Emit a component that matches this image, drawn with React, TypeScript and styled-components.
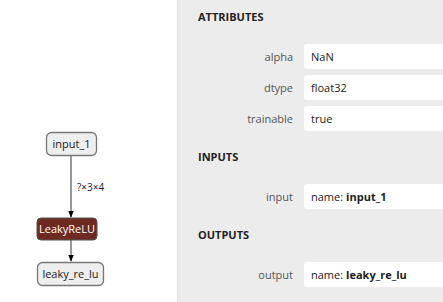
import React from "react";
import styled, { createGlobalStyle } from "styled-components";

const Global = createGlobalStyle`
  html, body { margin: 0; padding: 0; width: 443px; height: 302px; overflow: hidden; background: #fff; }
  body { font-family: "Open Sans", "Noto Sans", sans-serif; }
`;

const Page = styled.div`
  display: flex;
  width: 443px;
  height: 302px;
`;

const Canvas = styled.div`
  width: 177px;
  flex: none;
  background: #ffffff;
`;

const Sidebar = styled.div`
  flex: 1;
  background: #ececec;
  border-left: 1px solid #e2e2e2;
  padding: 8px 0 0 20px;
  display: flex;
  flex-direction: column;
`;

const SectionTitle = styled.div`
  font-size: 11px;
  font-weight: 700;
  color: #222;
  height: 18px;
  line-height: 18px;
  margin-bottom: 18px;
`;

const Rows = styled.div`
  display: flex;
  flex-direction: column;
  gap: 6px;
  margin-bottom: 17px;
`;

const Row = styled.div`
  display: grid;
  grid-template-columns: 95px 1fr;
  column-gap: 11px;
  align-items: center;
`;

const Label = styled.div`
  text-align: right;
  font-size: 11px;
  color: #555;
`;

const Value = styled.div`
  background: #fff;
  height: 25px;
  border-radius: 3px 0 0 3px;
  display: flex;
  align-items: center;
  padding-left: 7px;
  font-size: 11px;
  color: #222;
`;

const Strong = styled.b`
  font-weight: 700;
  margin-left: 3px;
`;

const Graph = () => (
  <svg width="177" height="302" viewBox="0 0 177 302">
    <defs>
      <marker id="arrow" viewBox="0 0 10 10" refX="9" refY="5" markerWidth="7" markerHeight="7" orient="auto">
        <path d="M0,1 L10,5 L0,9 z" fill="#000" />
      </marker>
    </defs>
    <line x1="71" y1="156" x2="71" y2="217" stroke="#333" strokeWidth="1" markerEnd="url(#arrow)" />
    <line x1="71" y1="240" x2="71" y2="261" stroke="#333" strokeWidth="1" markerEnd="url(#arrow)" />
    <text x="77" y="191" fontSize="10" fill="#1a1a3a" fontFamily="Open Sans, sans-serif">?×3×4</text>
    <rect x="46.5" y="132.5" width="50" height="23" rx="5" fill="#eeeeee" stroke="#777" strokeWidth="1.3" />
    <text x="71.5" y="148" fontSize="11" fill="#222" textAnchor="middle" fontFamily="Open Sans, sans-serif">input_1</text>
    <rect x="37" y="218" width="60" height="22" rx="4" fill="#6e2a21" stroke="#555" strokeWidth="1" />
    <text x="67" y="233" fontSize="11" fill="#fff" textAnchor="middle" fontFamily="Open Sans, sans-serif">LeakyReLU</text>
    <rect x="37.5" y="262.5" width="66" height="23" rx="5" fill="#eeeeee" stroke="#777" strokeWidth="1.3" />
    <text x="70.5" y="278" fontSize="11" fill="#222" textAnchor="middle" fontFamily="Open Sans, sans-serif">leaky_re_lu</text>
  </svg>
);

export default function App() {
  return (
    <Page>
      <Global />
      <Canvas>
        <Graph />
      </Canvas>
      <Sidebar>
        <SectionTitle>ATTRIBUTES</SectionTitle>
        <Rows>
          <Row><Label>alpha</Label><Value>NaN</Value></Row>
          <Row><Label>dtype</Label><Value>float32</Value></Row>
          <Row><Label>trainable</Label><Value>true</Value></Row>
        </Rows>
        <SectionTitle>INPUTS</SectionTitle>
        <Rows>
          <Row><Label>input</Label><Value>name:<Strong>input_1</Strong></Value></Row>
        </Rows>
        <SectionTitle>OUTPUTS</SectionTitle>
        <Rows>
          <Row><Label>output</Label><Value>name:<Strong>leaky_re_lu</Strong></Value></Row>
        </Rows>
      </Sidebar>
    </Page>
  );
}
